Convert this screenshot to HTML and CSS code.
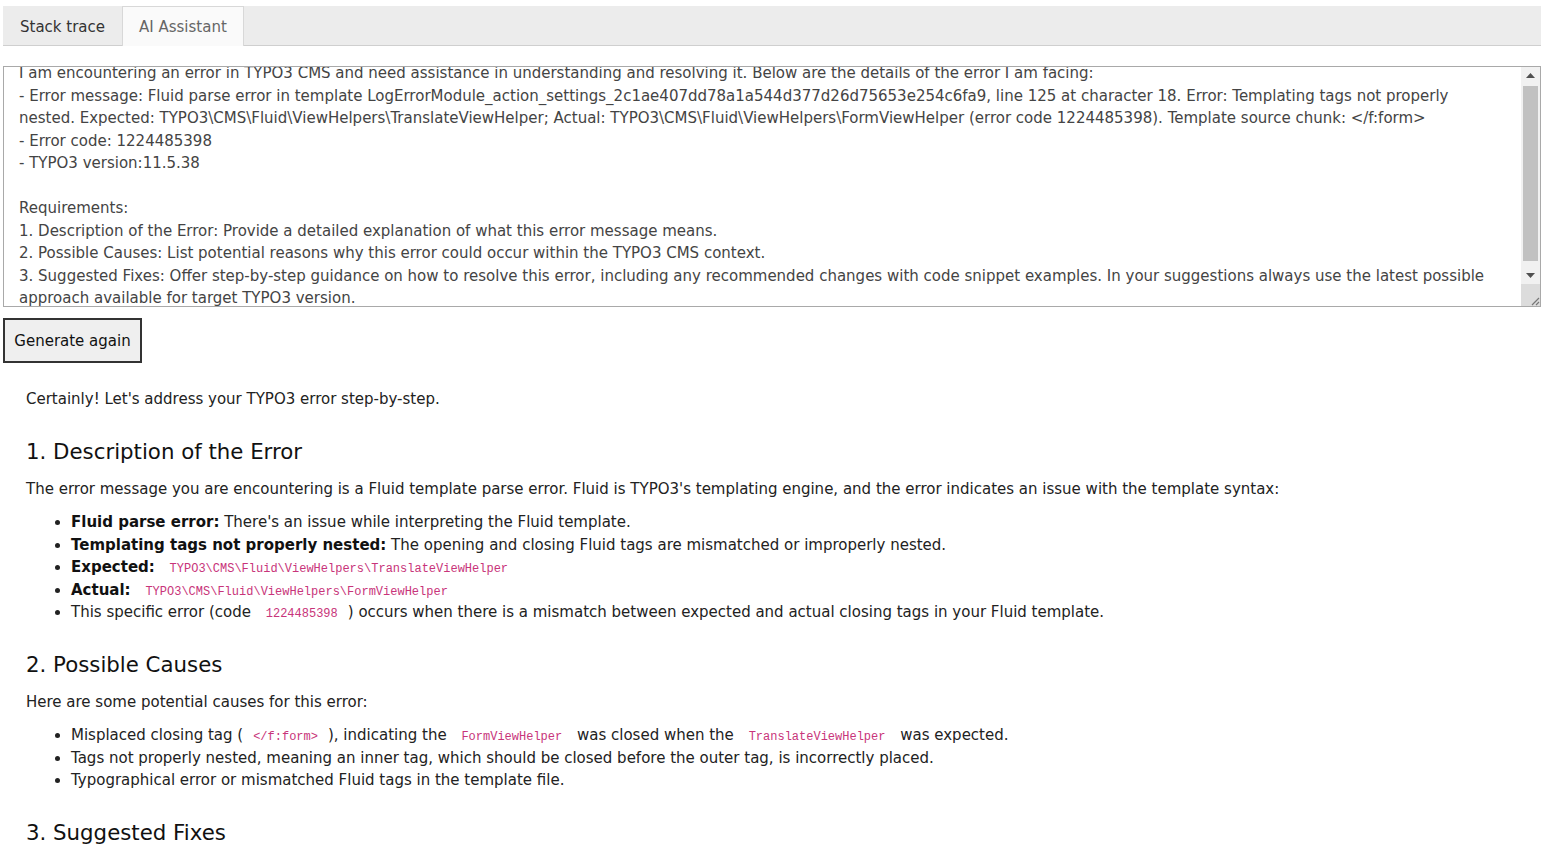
FILE: index.html
```html
<!DOCTYPE html>
<html>
<head>
<meta charset="utf-8">
<link rel="stylesheet" href="styles.css">
</head>
<body>
<div class="page">
  <div class="tabs">
    <div class="tab">Stack trace</div>
    <div class="tab active">AI Assistant</div>
  </div>

  <div class="prompt">
    <div class="prompt-view">
      <div class="prompt-text">
        <div class="ln">I am encountering an error in TYPO3 CMS and need assistance in understanding and resolving it. Below are the details of the error I am facing:</div>
        <div class="ln">- Error message: Fluid parse error in template LogErrorModule_action_settings_2c1ae407dd78a1a544d377d26d75653e254c6fa9, line 125 at character 18. Error: Templating tags not properly</div>
        <div class="ln">nested. Expected: TYPO3\CMS\Fluid\ViewHelpers\TranslateViewHelper; Actual: TYPO3\CMS\Fluid\ViewHelpers\FormViewHelper (error code 1224485398). Template source chunk: &lt;/f:form&gt;</div>
        <div class="ln">- Error code: 1224485398</div>
        <div class="ln">- TYPO3 version:11.5.38</div>
        <div class="ln">&nbsp;</div>
        <div class="ln">Requirements:</div>
        <div class="ln">1. Description of the Error: Provide a detailed explanation of what this error message means.</div>
        <div class="ln">2. Possible Causes: List potential reasons why this error could occur within the TYPO3 CMS context.</div>
        <div class="ln">3. Suggested Fixes: Offer step-by-step guidance on how to resolve this error, including any recommended changes with code snippet examples. In your suggestions always use the latest possible</div>
        <div class="ln">approach available for target TYPO3 version.</div>
      </div>
    </div>
    <div class="scrollbar">
      <div class="sb-btn"><svg width="9" height="5" viewBox="0 0 9 5"><path d="M0 5 L4.5 0 L9 5 Z" fill="#505050"/></svg></div>
      <div class="sb-track"><div class="sb-thumb"></div></div>
      <div class="sb-btn"><svg width="9" height="5" viewBox="0 0 9 5"><path d="M0 0 L4.5 5 L9 0 Z" fill="#505050"/></svg></div>
      <div class="sb-corner"><svg width="12" height="12" viewBox="0 0 12 12"><path d="M11 4 L4 11 M11 8 L8 11" stroke="#777" stroke-width="1.2"/></svg></div>
    </div>
  </div>

  <button class="btn">Generate again</button>

  <div class="answer">
    <p>Certainly! Let's address your TYPO3 error step-by-step.</p>

    <h3>1. Description of the Error</h3>
    <p>The error message you are encountering is a Fluid template parse error. Fluid is TYPO3's templating engine, and the error indicates an issue with the template syntax:</p>
    <ul>
      <li><strong>Fluid parse error:</strong> There's an issue while interpreting the Fluid template.</li>
      <li><strong>Templating tags not properly nested:</strong> The opening and closing Fluid tags are mismatched or improperly nested.</li>
      <li><strong>Expected:</strong> <code>TYPO3\CMS\Fluid\ViewHelpers\TranslateViewHelper</code></li>
      <li><strong>Actual:</strong> <code>TYPO3\CMS\Fluid\ViewHelpers\FormViewHelper</code></li>
      <li>This specific error (code <code>1224485398</code>) occurs when there is a mismatch between expected and actual closing tags in your Fluid template.</li>
    </ul>

    <h3>2. Possible Causes</h3>
    <p>Here are some potential causes for this error:</p>
    <ul>
      <li>Misplaced closing tag (<code>&lt;/f:form&gt;</code>), indicating the <code>FormViewHelper</code> was closed when the <code>TranslateViewHelper</code> was expected.</li>
      <li>Tags not properly nested, meaning an inner tag, which should be closed before the outer tag, is incorrectly placed.</li>
      <li>Typographical error or mismatched Fluid tags in the template file.</li>
    </ul>

    <h3>3. Suggested Fixes</h3>
  </div>
</div>
</body>
</html>
```

FILE: styles.css
```css
html, body {
  margin: 0;
  padding: 0;
  background: #ffffff;
}
body {
  font-family: "DejaVu Sans", Verdana, sans-serif;
  font-size: 15px;
  color: #222;
  overflow: hidden;
}
.page {
  padding: 6px 4px 0 3px;
}
.tabs {
  display: flex;
  background: #ececec;
  border-bottom: 1px solid #cfcfcf;
  height: 39px;
  align-items: stretch;
}
.tab {
  padding: 1px 16px 0;
  display: flex;
  align-items: center;
  color: #333;
  font-size: 15px;
  border: 1px solid transparent;
  border-bottom: none;
}
.tab.active {
  background: #fafafa;
  color: #666;
  border-color: #d8d8d8;
  margin-bottom: -1px;
}
.prompt {
  margin-top: 20px;
  height: 241px;
  border: 1px solid #a9a9a9;
  box-sizing: border-box;
  display: flex;
  background: #fff;
}
.prompt-view {
  flex: 1;
  overflow: hidden;
  padding: 0 15px;
}
.prompt-text {
  margin-top: -5px;
  color: #444;
  line-height: 22.5px;
  font-size: 15px;
}
.ln {
  white-space: nowrap;
}
.scrollbar {
  width: 19px;
  display: flex;
  flex-direction: column;
  background: #f1f1f1;
}
.sb-btn {
  height: 17px;
  display: flex;
  align-items: center;
  justify-content: center;
}
.sb-track {
  flex: 1;
  padding: 2px 2px 6px 2px;
  display: flex;
}
.sb-thumb {
  flex: 1;
  background: #c1c1c1;
}
.sb-corner {
  height: 22px;
  background: #dcdcdc;
  display: flex;
  align-items: flex-end;
  justify-content: flex-end;
}
.btn {
  margin-top: 11px;
  height: 45px;
  width: 139px;
  font-family: "DejaVu Sans", Verdana, sans-serif;
  font-size: 15px;
  color: #111;
  background: #efefef;
  border: 2px solid #333;
  padding: 1px 0 0;
  display: block;
}
.answer {
  padding: 25px 0 0 23px;
}
.answer p {
  margin: 0 0 11px;
  line-height: 22.5px;
}
.answer h3 {
  font-size: 21.3px;
  font-weight: normal;
  color: #111;
  margin: 27px 0 13px;
  line-height: 27px;
}
.answer ul {
  margin: 11px 0;
  padding-left: 45px;
  line-height: 22.5px;
}
.answer strong {
  color: #111;
}
code {
  font-family: "Liberation Mono", monospace;
  font-size: 12px;
  line-height: 1;
  color: #c8347a;
  padding: 2px 4px;
  margin: 0 6px;
}
```
